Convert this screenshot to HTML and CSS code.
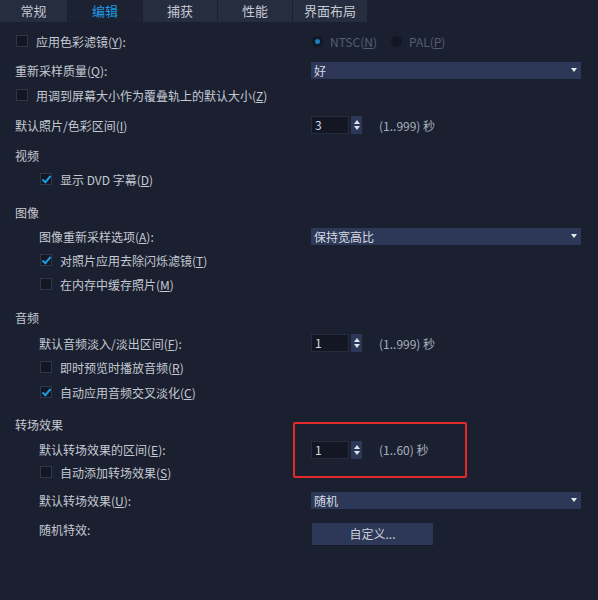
FILE: index.html
```html
<!DOCTYPE html>
<html lang="zh-CN">
<head>
    <meta charset="UTF-8">
    <title>参数选择 - 编辑</title>
    <link rel="stylesheet" href="styles.css">
</head>
<body>

    <div class="tabs">
        <div class="tab first">常规</div>
        <div class="tab active">编辑</div>
        <div class="tab">捕获</div>
        <div class="tab">性能</div>
        <div class="tab">界面布局</div>
    </div>

    <div class="panel">
        <div class="row">
            <div class="left"><span class="box"></span>应用色彩滤镜(<u>Y</u>):</div>
            <div class="right radios">
                <span class="radio on"></span><span class="dim gap">NTSC(<u>N</u>)</span>
                <span class="radio"></span><span class="dim">PAL(<u>P</u>)</span>
            </div>
        </div>
        <div class="row mt5">
            <div class="left">重新采样质量(<u>Q</u>):</div>
            <div class="right"><div class="select"><span>好</span><span class="arrow"></span></div></div>
        </div>
        <div class="row mt1">
            <div class="left"><span class="box"></span>用调到屏幕大小作为覆叠轨上的默认大小(<u>Z</u>)</div>
        </div>
        <div class="row mt6">
            <div class="left">默认照片/色彩区间(<u>I</u>)</div>
            <div class="right">
                <div class="spin"><div class="spin-input">3</div><div class="spin-btn"><span class="up"></span><span class="down"></span></div></div>
                <span class="unit">(1..999) 秒</span>
            </div>
        </div>

        <div class="sec mt9">视频</div>
        <div class="row mt1">
            <div class="left in"><span class="box checked"></span>显示 DVD 字幕(<u>D</u>)</div>
        </div>

        <div class="sec mt12">图像</div>
        <div class="row mt1">
            <div class="left in">图像重新采样选项(<u>A</u>):</div>
            <div class="right"><div class="select"><span>保持宽高比</span><span class="arrow"></span></div></div>
        </div>
        <div class="row">
            <div class="left in"><span class="box checked"></span>对照片应用去除闪烁滤镜(<u>T</u>)</div>
        </div>
        <div class="row">
            <div class="left in"><span class="box"></span>在内存中缓存照片(<u>M</u>)</div>
        </div>

        <div class="sec mt12">音频</div>
        <div class="row mt3">
            <div class="left in">默认音频淡入/淡出区间(<u>F</u>):</div>
            <div class="right">
                <div class="spin"><div class="spin-input">1</div><div class="spin-btn"><span class="up"></span><span class="down"></span></div></div>
                <span class="unit">(1..999) 秒</span>
            </div>
        </div>
        <div class="row">
            <div class="left in"><span class="box"></span>即时预览时播放音频(<u>R</u>)</div>
        </div>
        <div class="row mt1">
            <div class="left in"><span class="box checked"></span>自动应用音频交叉淡化(<u>C</u>)</div>
        </div>

        <div class="sec mt11">转场效果</div>
        <div class="row mt4 short">
            <div class="left in">默认转场效果的区间(<u>E</u>):</div>
            <div class="right">
                <div class="spin"><div class="spin-input">1</div><div class="spin-btn"><span class="up"></span><span class="down"></span></div></div>
                <span class="unit">(1..60) 秒</span>
            </div>
        </div>
        <div class="row">
            <div class="left in"><span class="box"></span>自动添加转场效果(<u>S</u>)</div>
        </div>
        <div class="row mt4">
            <div class="left in">默认转场效果(<u>U</u>):</div>
            <div class="right"><div class="select"><span>随机</span><span class="arrow"></span></div></div>
        </div>
        <div class="row mt6 top">
            <div class="left in">随机特效:</div>
            <div class="right"><div class="btn">自定义...</div></div>
        </div>

        <!-- red highlight drawn over the dialog -->
        <div class="mark"></div>
    </div>

</body>
</html>
```

FILE: styles.css
```css
body {
    margin: 0;
    width: 598px;
    height: 600px;
    overflow: hidden;
    background-color: #1b2030;
    font-family: "Noto Sans CJK SC", "Microsoft YaHei", sans-serif;
    font-size: 12px;
    color: #c4c9d2;
}

u {
    text-underline-offset: 1px;
}

.tabs {
    display: flex;
    gap: 1px;
    height: 22px;
}

.tab {
    width: 74px;
    background-color: #262d3f;
    text-align: center;
    line-height: 22px;
    font-size: 13px;
    color: #c4c9d2;
}

.tab.first {
    width: 67px;
}

.tab.active {
    background-color: #1d2232;
    color: #1e9be2;
}

.panel {
    position: relative;
    padding: 7px 0 0 15px;
}

.row {
    display: flex;
    align-items: center;
    height: 24px;
}

.row.short {
    height: 21px;
}

.row.top {
    align-items: flex-start;
    line-height: 24px;
}

.left {
    flex: none;
    width: 296px;
    display: flex;
    align-items: center;
    white-space: nowrap;
}

.left.in {
    padding-left: 24px;
    box-sizing: border-box;
}

.right {
    display: flex;
    align-items: center;
}

.sec {
    height: 20px;
    line-height: 20px;
}

.mt1 { margin-top: 1px; }
.mt3 { margin-top: 3px; }
.mt4 { margin-top: 4px; }
.mt5 { margin-top: 5px; }
.mt6 { margin-top: 6px; }
.mt9 { margin-top: 9px; }
.mt11 { margin-top: 11px; }
.mt12 { margin-top: 12px; }

/* checkbox */
.box {
    position: relative;
    flex: none;
    width: 10px;
    height: 10px;
    margin: 0 8px 0 1px;
    border: 1px solid #2f3648;
    background-color: #131724;
}

.box.checked::after {
    content: "";
    position: absolute;
    left: 3px;
    top: 0;
    width: 3px;
    height: 7px;
    border-right: 2px solid #1e9be2;
    border-bottom: 2px solid #1e9be2;
    transform: rotate(40deg);
}

/* radio buttons, greyed out */
.radio {
    position: relative;
    width: 11px;
    height: 11px;
    margin: 0 7px 0 1px;
    border-radius: 50%;
    background-color: #131724;
}

.radio.on::after {
    content: "";
    position: absolute;
    left: 3px;
    top: 3px;
    width: 5px;
    height: 5px;
    border-radius: 50%;
    background-color: #1a7fbd;
}

.dim {
    color: #555d70;
}

.dim.gap {
    margin-right: 13px;
}

/* dropdown */
.select {
    width: 270px;
    height: 17px;
    box-sizing: border-box;
    padding: 0 4px 0 3px;
    display: flex;
    align-items: center;
    justify-content: space-between;
    background-color: #2d3858;
    color: #d6dae1;
    line-height: 17px;
}

.arrow {
    width: 0;
    height: 0;
    border-left: 3px solid transparent;
    border-right: 3px solid transparent;
    border-top: 4px solid #e6e9ee;
}

/* spin box */
.spin {
    display: flex;
    height: 18px;
}

.spin-input {
    width: 38px;
    box-sizing: border-box;
    padding-left: 3px;
    border: 1px solid #252c3d;
    background-color: #131724;
    color: #d6dae1;
    line-height: 16px;
}

.spin-btn {
    width: 11px;
    margin-left: 2px;
    background-color: #2d3858;
    display: flex;
    flex-direction: column;
    align-items: center;
    justify-content: center;
    gap: 2px;
}

.spin-btn .up {
    border-left: 3px solid transparent;
    border-right: 3px solid transparent;
    border-bottom: 4px solid #dfe3ea;
}

.spin-btn .down {
    border-left: 3px solid transparent;
    border-right: 3px solid transparent;
    border-top: 4px solid #dfe3ea;
}

.unit {
    margin-left: 17px;
    color: #a7afbf;
}

.btn {
    width: 121px;
    height: 22px;
    margin: 5px 0 0 1px;
    background-color: #2d3858;
    text-align: center;
    line-height: 22px;
    color: #c9cdd6;
    box-shadow: 0 1px 0 #161a27;
}

.mark {
    position: absolute;
    left: 293px;
    top: 400px;
    width: 174px;
    height: 56px;
    box-sizing: border-box;
    border: 2px solid #e3292a;
    border-radius: 2px;
}
```
